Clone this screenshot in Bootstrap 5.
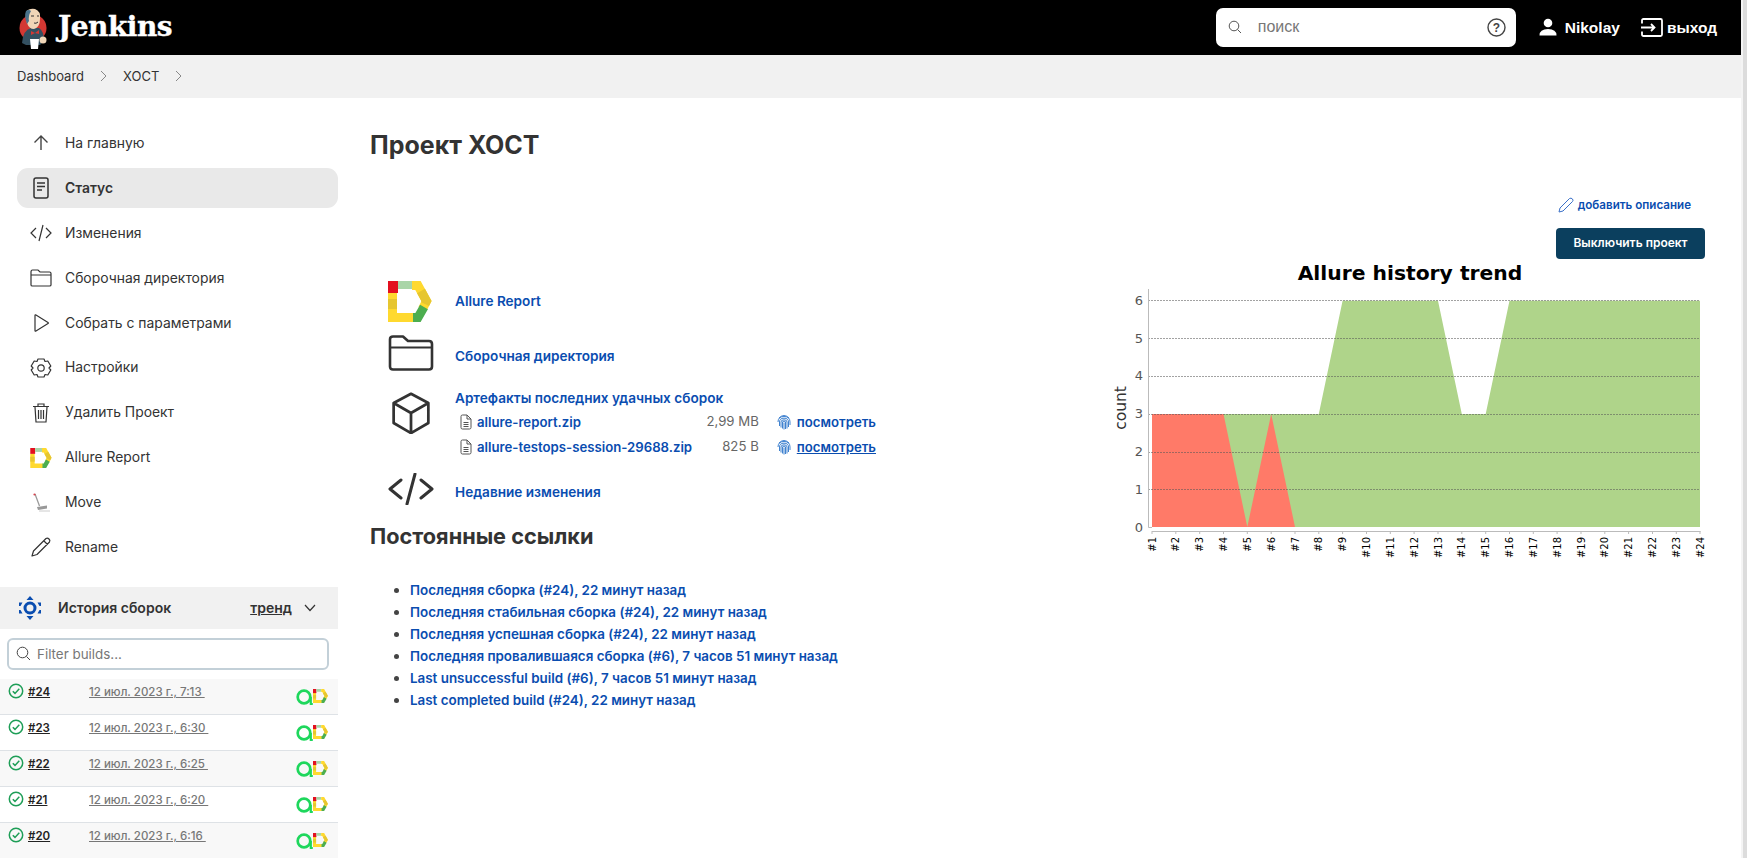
<!DOCTYPE html>
<html lang="ru">
<head>
<meta charset="utf-8">
<title>ХОСТ</title>
<link href="https://cdn.jsdelivr.net/npm/bootstrap@5.3.0/dist/css/bootstrap.min.css" rel="stylesheet">
<style>
html,body{height:100%;overflow:hidden}
body{font-family:Inter,"Noto Sans",sans-serif;color:#333;font-size:14px;background:#fff}
a{color:#0a4db0;text-decoration:none}
.shell{height:858px;overflow:hidden;min-width:0}
.gutter{width:6px;flex:none;background:linear-gradient(90deg,#f4f4f4 0 2px,#dcdcdc 2px)}
.topbar{height:55px;background:#000;padding:0 24px 0 18px}
.brandname{font-family:"DejaVu Serif",serif;font-weight:700;font-size:28px;color:#fff;letter-spacing:-.5px;margin-left:10px;line-height:1;-webkit-text-stroke:.4px #fff}
.searchbox{width:300px;height:39px;background:#fff;border-radius:7px;padding:0 10px 0 12px;color:#777;font-size:16px;font-family:"Liberation Sans",sans-serif}
.searchbox span{margin-left:16px}
.toplink{color:#fff;font-weight:600;font-size:15.5px;font-family:"Liberation Sans",sans-serif}
.crumbs{height:43px;background:#f1f1f1;padding:0 17px;font-size:13px;color:#333}
.crumbs svg{margin:0 16px}
.crumbs svg.lastc{margin-right:0}
.sidecol{width:338px;flex:none;padding-top:25.5px}
.taskset{padding-left:17px;gap:4.9px;margin-bottom:19.5px}
.taskitem{height:40px;border-radius:11px;color:#333;font-size:13.9px;padding-left:13px;gap:13px}
.taskitem svg{flex:none}
.taskitem.on{background:#e9e9e9;font-weight:600}
.histhead{height:42px;background:#f1f1f1;padding:0 22px 0 18px;font-weight:600;font-size:14px}
.histhead .trendlink{color:#333;text-decoration:underline;margin-right:12px;margin-left:auto}
.filterwrap{margin:9px 9px 9px 7px;height:32px;border:2px solid #c3d0d8;border-radius:6px;padding-left:7px;color:#777;gap:6px;font-size:13.4px}
.buildrow{height:36px;padding:5px 10px 0 8px;border-top:1px solid #eee;border-radius:0;font-size:11.5px}
.buildrow:nth-child(odd){background:#f8f8f8}
.checkic{flex:none;margin-top:-1px}
.buildno{color:#222;font-weight:600;text-decoration:underline;margin-left:4px;width:61px}
.builddate{color:#777;font-weight:500;text-decoration:underline;white-space:pre;flex:1}
.buildicons{margin-top:5px}
.maincol{padding:0 11px 0 32px;min-width:0}
.pagetitle{font-size:25px;font-weight:700;color:#333;margin:32px 0 0;line-height:30px}
.linkset{margin-top:121px}
.linkrow{gap:21px}
.linkrow a{font-weight:600;font-size:13.6px;line-height:20px}
.iconcell{width:46px;flex:none;margin-left:18px;text-align:center}
.textdrop{margin-top:6px}
.filerow{font-weight:600;height:25px;width:421px;padding-left:5px;font-size:13.2px}
.filerow a.fname,.filerow a.fview{font-size:13.2px}
.filerow .fname{margin-left:5px;flex:1}
.filerow .fsize{color:#666;font-weight:400;margin-right:18px}
.filerow .fview{margin-left:6px}
.permtitle{font-size:21.7px;font-weight:700;margin:17px 0 0;line-height:28px}
.permlist{margin:29px 0 0;padding-left:40px;line-height:22px}
.permlist li{color:#444}
.permlist a{font-weight:600;font-size:13.4px}
.rightcol{width:640px;flex:none;padding-top:89px}
.actionline{padding-right:25px}
.editlink{font-size:11.6px;font-weight:600;margin-right:14px;height:37px}
.offbtn{background:#0b3f5e;color:#fff;font-size:12px;font-weight:600;width:149px;height:31px;padding:0;border-radius:4px;margin-top:4px}
.offbtn:hover{background:#0b3f5e;color:#fff}
.trendchart{display:block;margin-top:-10px;font-family:"DejaVu Sans",sans-serif}
</style>
</head>
<body>
<svg class="d-none" xmlns="http://www.w3.org/2000/svg">
  <symbol id="allure" viewBox="0 0 44 41">
    <path d="M4.500 12V36.500H26" fill="none" stroke="#ffd92f" stroke-width="9"/>
    <path d="M4.500 18V28" fill="none" stroke="#e6c630" stroke-width="9"/>
    <rect width="10" height="12" fill="#e3101f"/>
    <rect x="10" width="14" height="8" fill="#a9d5a8"/>
    <path d="M24 4.500H30L38.500 20L34.500 28" fill="none" stroke="#ffd92f" stroke-width="9"/>
    <path d="M33 10L38.500 20L37 23" fill="none" stroke="#e6c630" stroke-width="9"/>
    <path d="M36 26L30 36.500H25" fill="none" stroke="#4cae4f" stroke-width="9"/>
  </symbol>
  <symbol id="testops" viewBox="0 0 17 16">
    <circle cx="8" cy="8" r="6.300" fill="none" stroke="#1ed75c" stroke-width="2.700"/>
    <path d="M14.800 8V15H16.800" fill="none" stroke="#1ed75c" stroke-width="2.200"/>
  </symbol>
  <symbol id="okcheck" viewBox="0 0 16 16">
    <circle cx="8" cy="8" r="6.700" fill="none" stroke="#1e9e57" stroke-width="1.500"/>
    <path d="M4.800 8.200L7 10.400L11.300 5.800" fill="none" stroke="#1e9e57" stroke-width="1.500"/>
  </symbol>
  <symbol id="zipfile" viewBox="0 0 12 16">
    <path d="M1 2.500Q1 1 2.500 1H7L11 5V13.500Q11 15 9.500 15H2.500Q1 15 1 13.500Z" fill="none" stroke="#555" stroke-width="1"/>
    <path d="M7 1V5H11M3.500 8.500H8.500M3.500 10.500H8.500M3.500 12.500H8.500" fill="none" stroke="#555"/>
  </symbol>
  <symbol id="finger" viewBox="0 0 14 16" >
    <g fill="none" stroke="#2a74c9" stroke-width=".9">
      <path d="M2 4Q7-1 12 4"/>
      <path d="M1 8Q1 2.500 7 2.500T13 8V11"/>
      <path d="M2.500 12V8Q2.500 4.200 7 4.200T11.500 8V13"/>
      <path d="M4 13.500V8Q4 5.800 7 5.800T10 8V14.500"/>
      <path d="M5.500 14.500V8Q5.500 7.200 7 7.200T8.500 8V15"/>
      <path d="M7 8.500V15.500"/>
    </g>
  </symbol>
  <symbol id="folderic" viewBox="0 0 46 36">
    <path d="M2 4.500Q2 1.500 5 1.500H15L20 6H41Q44 6 44 9V31.500Q44 34.500 41 34.500H5Q2 34.500 2 31.500Z" fill="none" stroke="#333" stroke-width="2.600" stroke-linejoin="round"/>
    <path d="M2 12.500H44" stroke="#333" stroke-width="2"/>
  </symbol>
  <symbol id="codeic" viewBox="0 0 46 32">
    <path d="M13 7L2 16L13 25M33 7L44 16L33 25M27 1L19 31" fill="none" stroke="#333" stroke-width="3" stroke-linecap="round" stroke-linejoin="round"/>
  </symbol>
</svg>

<div class="d-flex">
<div class="shell flex-grow-1 d-flex flex-column">

<nav class="topbar d-flex align-items-center">
  <svg width="30" height="44" viewBox="16 2 30 44" aria-hidden="true">
    <circle cx="31" cy="25" r="13.500" fill="#d33833"/>
    <path d="M20 40Q21 27 29 25H37Q42 28 42 38L38 42H24Z" fill="#335061"/>
    <path d="M24 9Q27 5 33 6Q39 8 38 16Q38 24 32 26Q27 26 25 20Q23 14 24 9Z" fill="#f0d6b7"/>
    <path d="M24 8Q22 13 25 21L27 18Q26 13 29 8Q27 6 24 8Z" fill="#49728b"/>
    <path d="M29 28L33 30L37 27V31L33 30L29 32Z" fill="#d33833"/>
    <path d="M28 36H37L36 46H29Z" fill="#fff"/>
    <circle cx="41" cy="37" r="3.500" fill="#f0d6b7"/>
    <path d="M29 13H32M35 13H37M32 20Q34 21 36 19" stroke="#333" fill="none"/>
  </svg>
  <span class="brandname">Jenkins</span>
  <div class="searchbox d-flex align-items-center ms-auto">
    <svg width="14" height="14" viewBox="0 0 14 14"><circle cx="6" cy="6" r="4.800" fill="none" stroke="#555"/><path d="M9.500 9.500L13 13" stroke="#555"/></svg>
    <span class="flex-grow-1">поиск</span>
    <svg width="19" height="19" viewBox="0 0 19 19"><circle cx="9.500" cy="9.500" r="8.500" fill="none" stroke="#444" stroke-width="1.400"/><text x="9.500" y="14" text-anchor="middle" font-size="12" font-weight="700" fill="#444" font-family="Liberation Sans">?</text></svg>
  </div>
  <a class="toplink d-flex align-items-center" href="#" style="margin-left:23px">
    <svg width="18" height="18" viewBox="0 0 18 18" class="me-2"><circle cx="9" cy="5" r="4.300" fill="#fff"/><path d="M0.500 17.500Q0.500 11 9 11T17.500 17.500Z" fill="#fff"/></svg>Nikolay</a>
  <a class="toplink d-flex align-items-center" href="#" style="margin-left:21px">
    <svg width="22" height="19" viewBox="0 0 22 19" class="me-1"><path d="M1 5.500V2.500Q1 1 2.500 1H19.500Q21 1 21 2.500V16.500Q21 18 19.500 18H2.500Q1 18 1 16.500V13.500M0 9.500H13M10 6L13.500 9.500L10 13" fill="none" stroke="#fff" stroke-width="1.800"/></svg>выход</a>
</nav>

<div class="crumbs d-flex align-items-center">
  <span>Dashboard</span>
  <svg width="7" height="12" viewBox="0 0 7 12"><path d="M1 1L6 6L1 11" fill="none" stroke="#888"/></svg>
  <span>ХОСТ</span>
  <svg class="lastc" width="7" height="12" viewBox="0 0 7 12"><path d="M1 1L6 6L1 11" fill="none" stroke="#888"/></svg>
</div>

<div class="d-flex flex-grow-1" style="min-height:0">
  <aside class="sidecol">
    <div class="taskset d-flex flex-column">
      <a class="taskitem d-flex align-items-center" href="#"><svg width="22" height="22" viewBox="0 0 22 22"><path d="M11 18V4M4.500 10.500L11 4L17.500 10.500" fill="none" stroke="#444" stroke-width="1.400"/></svg>На главную</a>
      <a class="taskitem on d-flex align-items-center" href="#"><svg width="22" height="22" viewBox="0 0 22 22"><rect x="4" y="1" width="14" height="20" rx="2" fill="none" stroke="#333" stroke-width="1.500"/><path d="M7 6H15M7 9.500H15M7 13H12" stroke="#333" stroke-width="1.400"/></svg>Статус</a>
      <a class="taskitem d-flex align-items-center" href="#"><svg width="22" height="22" viewBox="0 0 22 22"><path d="M6 6L1 11L6 16M16 6L21 11L16 16M13 3L9 19" fill="none" stroke="#333" stroke-width="1.200"/></svg>Изменения</a>
      <a class="taskitem d-flex align-items-center" href="#"><svg width="22" height="22" viewBox="0 0 22 22"><path d="M1 5Q1 3 2.500 3H8L10 5H19.500Q21 5 21 6.500V18Q21 19 19.500 19H2.500Q1 19 1 18Z" fill="none" stroke="#333" stroke-width="1.200"/><path d="M1 8H21" stroke="#333"/></svg>Сборочная директория</a>
      <a class="taskitem d-flex align-items-center" href="#"><svg width="22" height="22" viewBox="0 0 22 22"><path d="M5 3.500Q5 2.500 6 3L18 10.500Q19 11 18 11.500L6 19Q5 19.500 5 18.500Z" fill="none" stroke="#333" stroke-width="1.200"/></svg>Собрать с параметрами</a>
      <a class="taskitem d-flex align-items-center" href="#"><svg width="22" height="22" viewBox="0 0 22 22"><path d="M8 2L14 2L15 4.500L17.800 4L20.800 9L19 11L20.800 13L17.800 18L15 17.500L14 20H8L7 17.500L4.200 18L1.200 13L3 11L1.200 9L4.200 4L7 4.500Z" fill="none" stroke="#333" stroke-width="1.200" stroke-linejoin="round"/><circle cx="11" cy="11" r="3.200" fill="none" stroke="#333" stroke-width="1.200"/></svg>Настройки</a>
      <a class="taskitem d-flex align-items-center" href="#"><svg width="22" height="22" viewBox="0 0 22 22"><path d="M3 4.500H19M8 4V2H14V4M5 5L6 20H16L17 5M8.500 8V17M11 8V17M13.500 8V17" fill="none" stroke="#333" stroke-width="1.200"/></svg>Удалить Проект</a>
      <a class="taskitem d-flex align-items-center" href="#"><svg width="22" height="20"><use href="#allure"/></svg>Allure Report</a>
      <a class="taskitem d-flex align-items-center" href="#"><svg width="22" height="22" viewBox="0 0 22 22"><path d="M5 2L9.500 14" stroke="#999" stroke-width="1.300"/><circle cx="4.500" cy="2.500" r="1.100" fill="#d9434e"/><path d="M7 15L17 13.500V16.500L8 18Z" fill="#999"/><path d="M9 19H20" stroke="#ccc"/></svg>Move</a>
      <a class="taskitem d-flex align-items-center" href="#"><svg width="22" height="22" viewBox="0 0 22 22"><path d="M2 20L3.500 15L16 2.500Q17.500 1.500 19 3Q20.500 4.500 19.500 6L7 18.500ZM14 5L17.500 8.500" fill="none" stroke="#333" stroke-width="1.200" stroke-linejoin="round"/></svg>Rename</a>
    </div>

    <div class="histhead d-flex align-items-center">
      <svg width="24" height="24" viewBox="0 0 24 24" class="me-3" style="flex:none"><circle cx="12" cy="12" r="5" fill="none" stroke="#0a4db0" stroke-width="3"/><path d="M12 0L15.500 4H8.500ZM12 24L8.500 20H15.500ZM1 6.500H4.500L2.500 10H1ZM23 6.500H19.500L21.500 10H23ZM1 17.500H4.500L2.500 14H1ZM23 17.500H19.500L21.500 14H23Z" fill="#0a4db0"/></svg>
      <span>История сборок</span>
      <a class="trendlink" href="#">тренд</a>
      <svg width="12" height="8" viewBox="0 0 12 8"><path d="M1 1L6 6.500L11 1" fill="none" stroke="#333" stroke-width="1.200"/></svg>
    </div>
    <div class="filterwrap d-flex align-items-center">
      <svg width="15" height="15" viewBox="0 0 15 15"><circle cx="6.500" cy="6.500" r="5.300" fill="none" stroke="#444"/><path d="M10.500 10.500L14 14" stroke="#444"/></svg>
      <span>Filter builds...</span>
    </div>
    <div class="list-group list-group-flush">
      <div class="list-group-item buildrow d-flex"><svg class="checkic" width="16" height="16"><use href="#okcheck"/></svg><a class="buildno" href="#">#24</a><a class="builddate" href="#">12 июл. 2023 г., 7:13 </a><span class="buildicons d-flex"><svg width="17" height="16"><use href="#testops"/></svg><svg width="15" height="14"><use href="#allure"/></svg></span></div>
      <div class="list-group-item buildrow d-flex"><svg class="checkic" width="16" height="16"><use href="#okcheck"/></svg><a class="buildno" href="#">#23</a><a class="builddate" href="#">12 июл. 2023 г., 6:30 </a><span class="buildicons d-flex"><svg width="17" height="16"><use href="#testops"/></svg><svg width="15" height="14"><use href="#allure"/></svg></span></div>
      <div class="list-group-item buildrow d-flex"><svg class="checkic" width="16" height="16"><use href="#okcheck"/></svg><a class="buildno" href="#">#22</a><a class="builddate" href="#">12 июл. 2023 г., 6:25 </a><span class="buildicons d-flex"><svg width="17" height="16"><use href="#testops"/></svg><svg width="15" height="14"><use href="#allure"/></svg></span></div>
      <div class="list-group-item buildrow d-flex"><svg class="checkic" width="16" height="16"><use href="#okcheck"/></svg><a class="buildno" href="#">#21</a><a class="builddate" href="#">12 июл. 2023 г., 6:20 </a><span class="buildicons d-flex"><svg width="17" height="16"><use href="#testops"/></svg><svg width="15" height="14"><use href="#allure"/></svg></span></div>
      <div class="list-group-item buildrow d-flex"><svg class="checkic" width="16" height="16"><use href="#okcheck"/></svg><a class="buildno" href="#">#20</a><a class="builddate" href="#">12 июл. 2023 г., 6:16 </a><span class="buildicons d-flex"><svg width="17" height="16"><use href="#testops"/></svg><svg width="15" height="14"><use href="#allure"/></svg></span></div>
    </div>
  </aside>

  <main class="maincol flex-grow-1 d-flex">
    <div class="flex-grow-1" style="min-width:0">
      <h1 class="pagetitle">Проект ХОСТ</h1>
      <div class="linkset">
        <div class="linkrow d-flex align-items-center"><span class="iconcell"><svg width="44" height="41" class="d-block"><use href="#allure"/></svg></span><a href="#">Allure Report</a></div>
        <div class="linkrow d-flex align-items-center" style="margin-top:13px"><span class="iconcell"><svg width="46" height="36" class="d-block"><use href="#folderic"/></svg></span><a href="#" class="textdrop">Сборочная директория</a></div>
        <div class="linkrow d-flex" style="margin-top:17px">
          <span class="iconcell"><svg width="46" height="42" viewBox="0 0 46 46" class="d-block mt-1"><path d="M23 2L42 12V34L23 45L4 34V12ZM4 12L23 23L42 12M23 23V45" fill="none" stroke="#333" stroke-width="3" stroke-linejoin="round"/></svg></span>
          <div>
            <a href="#" class="d-block">Артефакты последних удачных сборок</a>
            <div class="filerow d-flex align-items-center" style="margin-top:2px"><svg width="12" height="16"><use href="#zipfile"/></svg><a class="fname" href="#">allure-report.zip</a><span class="fsize">2,99 MB</span><svg width="14" height="16"><use href="#finger"/></svg><a class="fview" href="#">посмотреть</a></div>
            <div class="filerow d-flex align-items-center"><svg width="12" height="16"><use href="#zipfile"/></svg><a class="fname" href="#">allure-testops-session-29688.zip</a><span class="fsize">825 B</span><svg width="14" height="16"><use href="#finger"/></svg><a class="fview text-decoration-underline" href="#">посмотреть</a></div>
          </div>
        </div>
        <div class="linkrow d-flex align-items-center" style="margin-top:13px"><span class="iconcell"><svg width="46" height="32" class="d-block"><use href="#codeic"/></svg></span><a href="#" class="textdrop">Недавние изменения</a></div>
      </div>
      <h2 class="permtitle">Постоянные ссылки</h2>
      <ul class="permlist">
        <li><a href="#">Последняя сборка (#24), 22 минут назад</a></li>
        <li><a href="#">Последняя стабильная сборка (#24), 22 минут назад</a></li>
        <li><a href="#">Последняя успешная сборка (#24), 22 минут назад</a></li>
        <li><a href="#">Последняя провалившаяся сборка (#6), 7 часов 51 минут назад</a></li>
        <li><a href="#">Last unsuccessful build (#6), 7 часов 51 минут назад</a></li>
        <li><a href="#">Last completed build (#24), 22 минут назад</a></li>
      </ul>
    </div>
    <div class="rightcol">
      <div class="actionline d-flex flex-column align-items-end">
        <a class="editlink d-flex align-items-center" href="#"><svg width="16" height="16" viewBox="0 0 16 16" class="me-1"><path d="M1 15L2 11L11.500 1.500Q13 .5 14.500 2Q15.500 3.500 14.500 4.500L5 14Z" fill="none" stroke="#3a70c8"/></svg>добавить описание</a>
        <button class="btn offbtn" type="button">Выключить проект</button>
      </div>
      <svg class="trendchart" width="640" height="320" viewBox="1090 250 640 320" role="img">
        <text x="1410" y="281" text-anchor="middle" font-size="20.300" font-weight="700" fill="#000">Allure history trend</text>
        <polygon fill="#afd48a" points="1152,415 1318.800,415 1342.600,301.700 1438,301.700 1461.800,415 1485.700,415 1509.500,301.700 1700,301.700 1700,528 1152,528"/>
        <polygon fill="#ff7a68" points="1152,415 1223.500,415 1247.300,528 1271.200,415 1295,528 1152,528"/>
        <g stroke="#555" stroke-opacity=".55" stroke-width="1" stroke-dasharray="2 1">
          <path d="M1148 301.500H1700M1148 339.500H1700M1148 377.500H1700M1148 415.500H1700M1148 453.500H1700M1148 490.500H1700"/>
        </g>
        <path d="M1148.500 290V528.500H1152M1152 532.500H1700.500M1152 532V535M1175.800 532V535M1199.700 532V535M1223.500 532V535M1247.300 532V535M1271.200 532V535M1295 532V535M1318.800 532V535M1342.600 532V535M1366.500 532V535M1390.300 532V535M1414.100 532V535M1438 532V535M1461.800 532V535M1485.700 532V535M1509.500 532V535M1533.300 532V535M1557.100 532V535M1581 532V535M1604.800 532V535M1628.600 532V535M1652.500 532V535M1676.300 532V535M1700 532V535" fill="none" stroke="#bbb"/>
        <g font-size="13" fill="#555" text-anchor="end">
          <text x="1143" y="306">6</text><text x="1143" y="344">5</text><text x="1143" y="381">4</text><text x="1143" y="419">3</text><text x="1143" y="457">2</text><text x="1143" y="495">1</text><text x="1143" y="533">0</text>
        </g>
        <text transform="translate(1126 409) rotate(-90)" text-anchor="middle" font-size="15.500" fill="#333">count</text>
        <g font-size="10" fill="#000" text-anchor="end">
          <text transform="translate(1155.500 538) rotate(-90)">#1</text>
          <text transform="translate(1179.300 538) rotate(-90)">#2</text>
          <text transform="translate(1203.200 538) rotate(-90)">#3</text>
          <text transform="translate(1227 538) rotate(-90)">#4</text>
          <text transform="translate(1250.800 538) rotate(-90)">#5</text>
          <text transform="translate(1274.700 538) rotate(-90)">#6</text>
          <text transform="translate(1298.500 538) rotate(-90)">#7</text>
          <text transform="translate(1322.300 538) rotate(-90)">#8</text>
          <text transform="translate(1346.100 538) rotate(-90)">#9</text>
          <text transform="translate(1370 538) rotate(-90)">#10</text>
          <text transform="translate(1393.800 538) rotate(-90)">#11</text>
          <text transform="translate(1417.600 538) rotate(-90)">#12</text>
          <text transform="translate(1441.500 538) rotate(-90)">#13</text>
          <text transform="translate(1465.300 538) rotate(-90)">#14</text>
          <text transform="translate(1489.200 538) rotate(-90)">#15</text>
          <text transform="translate(1513 538) rotate(-90)">#16</text>
          <text transform="translate(1536.800 538) rotate(-90)">#17</text>
          <text transform="translate(1560.600 538) rotate(-90)">#18</text>
          <text transform="translate(1584.500 538) rotate(-90)">#19</text>
          <text transform="translate(1608.300 538) rotate(-90)">#20</text>
          <text transform="translate(1632.100 538) rotate(-90)">#21</text>
          <text transform="translate(1656 538) rotate(-90)">#22</text>
          <text transform="translate(1679.800 538) rotate(-90)">#23</text>
          <text transform="translate(1703.500 538) rotate(-90)">#24</text>
        </g>
      </svg>
    </div>
  </main>
</div>
</div>
<div class="gutter"></div>
</div>
<script src="https://cdn.jsdelivr.net/npm/bootstrap@5.3.0/dist/js/bootstrap.bundle.min.js"></script>
</body>
</html>
